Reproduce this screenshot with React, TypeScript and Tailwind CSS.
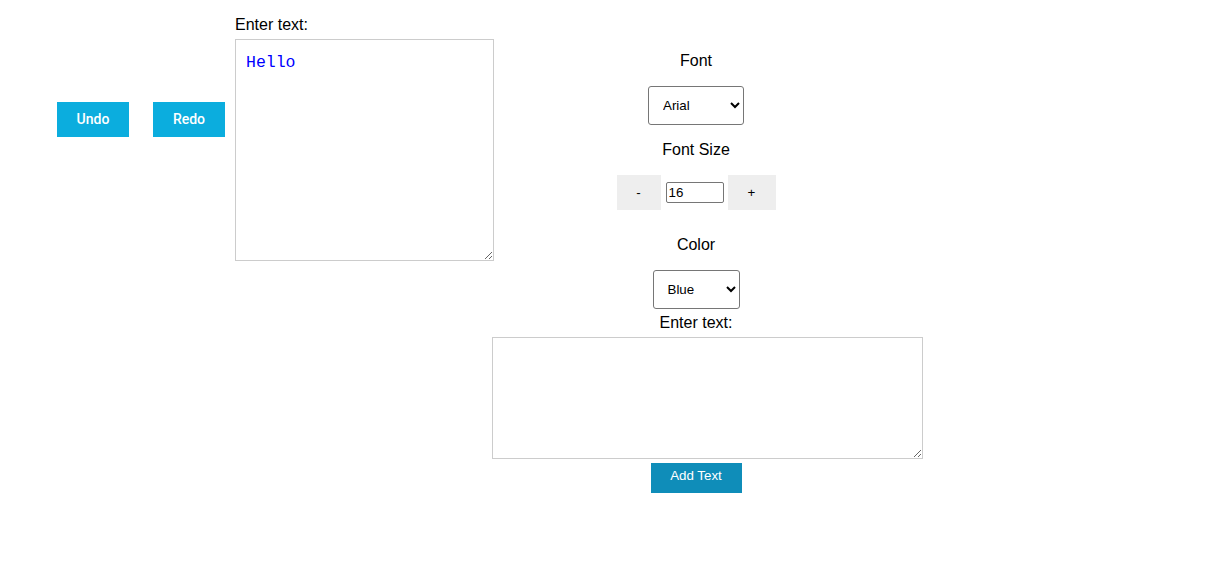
import { useState } from "react";

const sans = { fontFamily: '"Liberation Sans", Arial, sans-serif' };

export default function App() {
  const [text, setText] = useState("Hello");
  const [font, setFont] = useState("Arial");
  const [size, setSize] = useState(16);
  const [color, setColor] = useState("Blue");
  const [draft, setDraft] = useState("");

  return (
    <div className="min-h-[587px] w-full bg-white text-black" style={sans}>
      <div className="flex items-start pl-[57px]">
        {/* Undo / Redo */}
        <div className="mt-[102px] flex gap-[24px]">
          <button className="h-[35px] w-[72px] bg-[#0badde] text-[14px] font-medium text-white font-['Roboto',sans-serif]">
            Undo
          </button>
          <button className="h-[35px] w-[72px] bg-[#0badde] text-[14px] font-medium text-white font-['Roboto',sans-serif]">
            Redo
          </button>
        </div>

        {/* Main editor */}
        <div className="ml-[10px] flex flex-col pt-[16px]">
          <label className="text-[16px] leading-[18px]">Enter text:</label>
          <textarea
            value={text}
            onChange={(e) => setText(e.target.value)}
            className="mt-[5px] h-[222px] w-[259px] border border-[#cccccc] px-[10px] pt-[11px] pb-[10px] text-[16.5px] text-[#0000ff] font-['Liberation_Mono',monospace] outline-none"
          />
        </div>

        {/* Controls */}
        <div className="flex w-[404px] flex-col items-center pt-[52px]">
          <p className="text-[16px] leading-[18px]">Font</p>
          <select
            value={font}
            onChange={(e) => setFont(e.target.value)}
            className="mt-[16px] w-[96px] rounded-[3px] border border-[#767676] bg-white p-[10px] text-[13.33px] leading-[17px]"
          >
            <option>Arial</option>
            <option>Verdana</option>
            <option>Georgia</option>
          </select>

          <p className="mt-[16px] text-[16px] leading-[18px]">Font Size</p>
          <div className="mt-[16px] flex items-center">
            <button
              onClick={() => setSize(size - 1)}
              className="h-[35px] w-[44px] bg-[#eeeeee] text-[13.33px]"
            >
              -
            </button>
            <input
              type="number"
              value={size}
              onChange={(e) => setSize(Number(e.target.value))}
              className="ml-[5px] h-[21px] w-[58px] rounded-[2px] border border-[#767676] px-[2px] text-[13.33px] outline-none"
            />
            <button
              onClick={() => setSize(size + 1)}
              className="ml-[4px] h-[35px] w-[48px] bg-[#eeeeee] text-[13.33px]"
            >
              +
            </button>
          </div>

          <p className="mt-[26px] text-[16px] leading-[18px]">Color</p>
          <select
            value={color}
            onChange={(e) => setColor(e.target.value)}
            className="mt-[16px] w-[87px] rounded-[3px] border border-[#767676] bg-white p-[10px] text-[13.33px] leading-[17px]"
          >
            <option>Blue</option>
            <option>Red</option>
            <option>Green</option>
          </select>

          <p className="mt-[5px] text-[16px] leading-[18px]">Enter text:</p>
          <textarea
            value={draft}
            onChange={(e) => setDraft(e.target.value)}
            className="mt-[5px] -ml-[2px] h-[122px] w-[431px] self-start border border-[#cccccc] p-[4px] outline-none"
          />
          <button className="mt-[4px] h-[30px] w-[91px] bg-[#0f8db9] pb-[5px] text-[13.33px] text-white">
            Add Text
          </button>
        </div>
      </div>
    </div>
  );
}
